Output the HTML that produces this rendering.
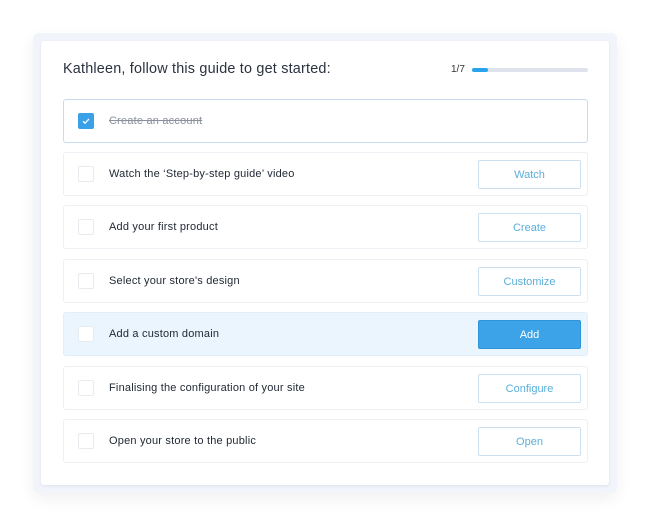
<!DOCTYPE html>
<html><head><style>
*{box-sizing:border-box;margin:0;padding:0}
body{width:650px;height:525px;background:#fff;font-family:"Liberation Sans",sans-serif;position:relative;overflow:hidden}
.outer{position:absolute;left:33px;top:33px;width:584px;height:460px;background:#f1f4fa;border-radius:6px;box-shadow:0 6px 16px rgba(0,0,0,0.06)}
.card{position:absolute;left:41px;top:41px;width:568px;height:444px;background:#fff;border-radius:3px;box-shadow:0 1px 3px rgba(0,0,0,0.08)}
.title{position:absolute;left:63px;top:61px;font-size:14.4px;color:#2a3240;letter-spacing:0.2px}
.prog{position:absolute;left:451px;top:64px;font-size:10px;color:#333}
.bar{position:absolute;left:472px;top:68px;width:116px;height:4px;border-radius:2px;background:#dde2ec}
.bar i{position:absolute;left:0;top:0;width:16px;height:4px;border-radius:2px;background:#2aa3ee}
.row{position:absolute;left:63px;width:525px;height:44px;border:1px solid #edf0f4;border-radius:3px;background:#fff}
.row .cb{position:absolute;left:14px;top:13px;width:16px;height:16px;border:1px solid #e8ebf0;border-radius:2px;background:#fff}
.row .t{position:absolute;left:45px;top:15px;font-size:11px;color:#222a35;letter-spacing:0.2px}
.row .b{position:absolute;left:414px;top:7px;width:103px;height:29px;border:1px solid #cde0ef;border-radius:2px;color:#5aafda;font-size:11px;text-align:center;line-height:28px}
</style></head><body>
<div class="outer"></div>
<div class="card"></div>
<div class="title">Kathleen, follow this guide to get started:</div>
<div class="prog">1/7</div>
<div class="bar"><i></i></div>

<div class="row" style="top:99px;border-color:#c7dcf2">
<div class="cb" style="background:#3aa1e9;border-color:#3aa1e9"><svg width="16" height="16" viewBox="0 0 16 16" style="position:absolute;left:-1px;top:-1px"><path d="M5 8.2l2 2 4-4.2" stroke="#fff" stroke-width="1.3" fill="none"/></svg></div>
<div class="t" style="color:#8a919c;text-decoration:line-through">Create an account</div></div>

<div class="row" style="top:152px"><div class="cb"></div><div class="t">Watch the ‘Step-by-step guide’ video</div><div class="b">Watch</div></div>
<div class="row" style="top:205px"><div class="cb"></div><div class="t">Add your first product</div><div class="b">Create</div></div>
<div class="row" style="top:259px"><div class="cb"></div><div class="t">Select your store's design</div><div class="b">Customize</div></div>
<div class="row" style="top:312px;background:#eaf5fd;border-color:#e2eef8"><div class="cb"></div><div class="t">Add a custom domain</div><div class="b" style="background:#3ca3e9;border-color:#2f93d8;color:#fff">Add</div></div>
<div class="row" style="top:366px"><div class="cb"></div><div class="t">Finalising the configuration of your site</div><div class="b">Configure</div></div>
<div class="row" style="top:419px"><div class="cb"></div><div class="t">Open your store to the public</div><div class="b">Open</div></div>
</body></html>
